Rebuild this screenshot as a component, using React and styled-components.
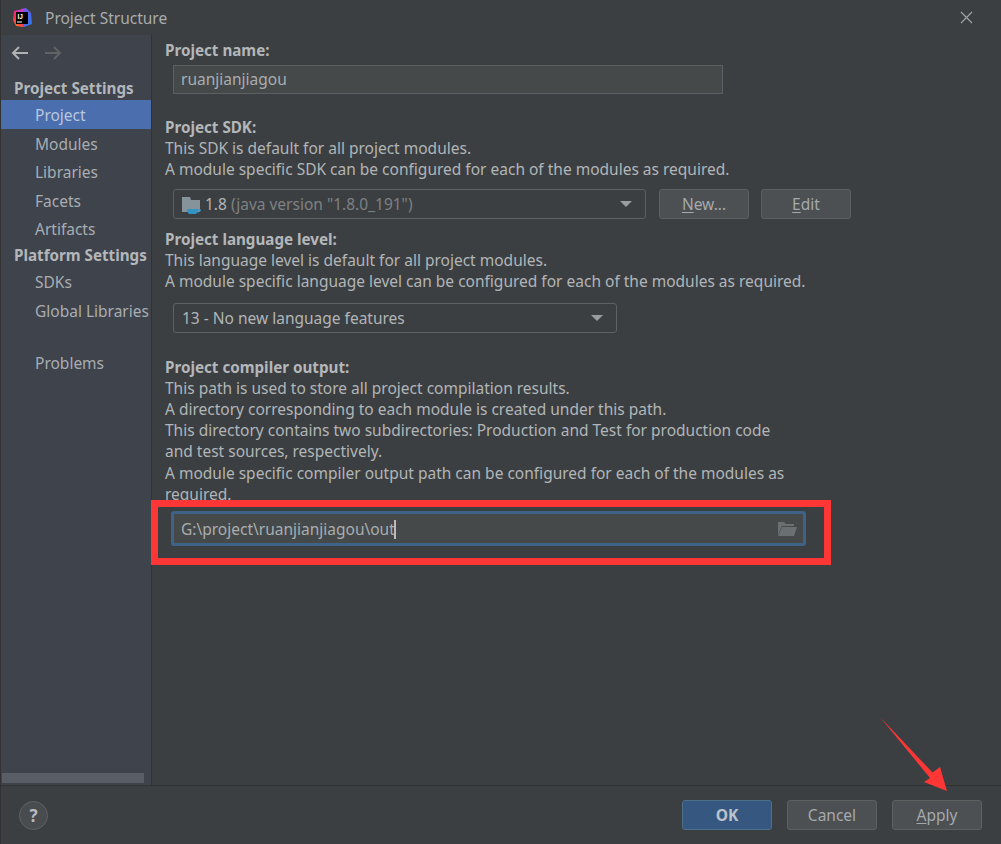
import React from "react";
import styled, { createGlobalStyle } from "styled-components";

const GlobalStyle = createGlobalStyle`
    html, body {
        margin: 0;
        padding: 0;
        background: #3c3f41;
    }
    body {
        font-family: "Noto Sans", "Open Sans", sans-serif;
        font-size: 15.5px;
        color: #bbbbbb;
    }
`

const Dialog = styled.div`
    position: relative;
    width: 1001px;
    height: 844px;
    box-sizing: border-box;
    border-left: 1px solid #323232;
    display: flex;
    flex-direction: column;
    overflow: hidden;
    background: #3c3f41;
`

const TitleBar = styled.div`
    height: 35px;
    flex: none;
    display: flex;
    align-items: center;
    padding: 0 28px 0 11px;
    gap: 13px;
    color: #a8acae;
    span {
        flex: 1;
    }
`

const Body = styled.div`
    flex: 1;
    display: flex;
    min-height: 0;
`

const Sidebar = styled.nav`
    width: 150px;
    flex: none;
    box-sizing: content-box;
    border-right: 1px solid #323232;
    background: #3e434c;
    display: flex;
    flex-direction: column;
    position: relative;
`

const NavArrows = styled.div`
    height: 41px;
    display: flex;
    align-items: center;
    gap: 15px;
    padding: 0 0 6px 10px;
    box-sizing: border-box;
`

const Heading = styled.div`
    height: 24px;
    line-height: 24px;
    padding-left: 13px;
    font-size: 15.2px;
    font-weight: 700;
    color: #b4b7ba;
    white-space: nowrap;
`

const Item = styled.div`
    height: 28.6px;
    line-height: 30.4px;
    padding-left: 34px;
    white-space: nowrap;
    color: ${(p) => (p.$selected ? "#b9c6dc" : "#a9adb2")};
    background: ${(p) => (p.$selected ? "#4b6eaf" : "transparent")};
`

const Spacer = styled.div`
    height: 24px;
`

const Scrollbar = styled.div`
    margin: auto 7px 2px 1px;
    height: 10px;
    background: #595d66;
`

const Main = styled.main`
    flex: 1;
    padding: 5px 0 0 13px;
    line-height: 21.3px;
    color: #b1b5b8;
`

const Section = styled.section`
    margin-top: ${(p) => p.$top}px;
    max-width: ${(p) => p.$wrap}px;
`

const Label = styled.div`
    font-size: 15.2px;
    font-weight: 700;
    color: #b4b7ba;
    margin-bottom: ${(p) => p.$tight ? -1 : 0}px;
`

const TextInput = styled.div`
    box-sizing: border-box;
    width: ${(p) => p.$width}px;
    height: 29px;
    margin: 4px 0 0 8px;
    padding-left: 7px;
    line-height: 27px;
    background: #45494a;
    border: 1px solid #5c6061;
    color: #a9adb0;
`

const Row = styled.div`
    display: flex;
    gap: 12px;
    margin: ${(p) => p.$top}px 0 0 8px;
`

const Combo = styled.div`
    box-sizing: border-box;
    width: ${(p) => p.$width}px;
    height: 30px;
    display: flex;
    align-items: center;
    gap: 3px;
    padding: 0 13px 0 8px;
    border: 1px solid #5e6162;
    border-radius: 3px;
    color: #b1b5b8;
    margin-right: 1px;
    em {
        font-style: normal;
        color: #7d8184;
    }
    i {
        margin-left: auto;
        width: 0;
        height: 0;
        border-left: 6px solid transparent;
        border-right: 6px solid transparent;
        border-top: 6px solid #9a9da0;
    }
    span {
        padding-top: 1px;
    }
`

const Button = styled.div`
    box-sizing: border-box;
    width: 90px;
    height: 30px;
    line-height: 28px;
    text-align: center;
    border-radius: 3px;
    border: 1px solid ${(p) => (p.$primary ? "#4c708c" : "#5e6060")};
    background: ${(p) => (p.$primary ? "#365880" : "#4c5052")};
    color: ${(p) => (p.$primary ? "#bbc3cc" : "#a4a9ad")};
    font-weight: ${(p) => (p.$primary ? 700 : 400)};
    u {
        text-underline-offset: 2px;
    }
`

const PathInput = styled.div`
    box-sizing: border-box;
    width: 635px;
    height: 35px;
    margin: 6px 0 0 6px;
    padding: 1px 6px 0 7px;
    display: flex;
    align-items: center;
    justify-content: space-between;
    background: #45494a;
    border: 3px solid #3f6287;
    border-radius: 3px;
    color: #a9adb0;
`

const Caret = styled.span`
    display: inline-block;
    width: 2px;
    height: 19px;
    margin-left: -1px;
    vertical-align: -4px;
    background: #bbbbbb;
`

const Footer = styled.footer`
    height: 59px;
    flex: none;
    box-sizing: border-box;
    border-top: 1px solid #323232;
    padding: 0 19px 0 18px;
    display: flex;
    align-items: center;
    gap: 15px;
`

const HelpButton = styled.div`
    width: 29px;
    height: 29px;
    box-sizing: border-box;
    margin-right: auto;
    border-radius: 50%;
    border: 1px solid #5e6263;
    background: #484c4e;
    color: #b7babc;
    font-weight: 700;
    font-size: 17px;
    line-height: 27px;
    text-align: center;
`

const Highlight = styled.div`
    position: absolute;
    left: 150px;
    top: 500px;
    width: 680px;
    height: 65px;
    box-sizing: border-box;
    border: 7px solid #ff3636;
    pointer-events: none;
`

const Overlay = styled.svg`
    position: absolute;
    left: -1px;
    top: 0;
    pointer-events: none;
`

const Logo = () => (
    <svg width="20" height="20" viewBox="0 0 20 20">
        <defs>
            <linearGradient id="ijA" x1="0.2" y1="1" x2="0.6" y2="0">
                <stop offset="0" stopColor="#f97a12" />
                <stop offset="0.5" stopColor="#fe2857" />
                <stop offset="1" stopColor="#c93cc8" />
            </linearGradient>
            <linearGradient id="ijB" x1="0" y1="0" x2="1" y2="1">
                <stop offset="0" stopColor="#8a4fe0" />
                <stop offset="1" stopColor="#1f7cf0" />
            </linearGradient>
        </defs>
        <path d="M9 1 L14 0 L19 5 L20 16 L12 19 L9 19 Z" fill="url(#ijB)" />
        <path d="M2 3 L11 1 L11 19 L4 18 L1 12 Z" fill="url(#ijA)" />
        <rect x="4" y="4" width="12" height="12" fill="#000" />
        <rect x="5" y="13.5" width="5" height="1" fill="#fff" />
        <text x="5.5" y="10.5" fontSize="6.5" fontWeight="700" fill="#fff" fontFamily="Liberation Sans">IJ</text>
    </svg>
)

const CloseIcon = () => (
    <svg width="13" height="13" viewBox="0 0 13 13">
        <path d="M1 1 L12 12 M12 1 L1 12" stroke="#a0a3a6" strokeWidth="1.2" fill="none" />
    </svg>
)

const NavArrow = ({ right, color }) => (
    <svg width="18" height="14" viewBox="0 0 18 14" style={{ transform: right ? "scaleX(-1)" : "none" }}>
        <path d="M17 7 H2 M8 1 L2 7 L8 13" stroke={color} strokeWidth="2" fill="none" />
    </svg>
)

const SdkIcon = () => (
    <svg width="20" height="20" viewBox="0 0 20 20" style={{ flex: "none" }}>
        <path d="M0 3 H8 L9 6 H18 V18 H0 Z" fill="#87939a" />
        <path d="M5 15 H16 L15.5 18 Q15 20 13 20 H8 Q6 20 5.5 18 Z" fill="#3592c4" />
        <path d="M16 16 H19 L17 18 H15.5" stroke="#3592c4" strokeWidth="1" fill="none" />
    </svg>
)

const FolderIcon = () => (
    <svg width="20" height="16" viewBox="0 0 20 16">
        <path d="M1 1 H7 L9 3 H17 V5 H5 L1 14 Z" fill="#6a6f72" />
        <path d="M5 6 H20 L17 15 H1 Z" fill="#6a6f72" />
    </svg>
)

const App = () => {
    return (
        <>
            <GlobalStyle />
            <Dialog>
                <TitleBar>
                    <Logo />
                    <span>Project Structure</span>
                    <CloseIcon />
                </TitleBar>
                <Body>
                    <Sidebar>
                        <NavArrows>
                            <NavArrow color="#afb1b3" />
                            <NavArrow right color="#5f6366" />
                        </NavArrows>
                        <Heading>Project Settings</Heading>
                        <Item $selected>Project</Item>
                        <Item>Modules</Item>
                        <Item>Libraries</Item>
                        <Item>Facets</Item>
                        <Item>Artifacts</Item>
                        <Heading>Platform Settings</Heading>
                        <Item>SDKs</Item>
                        <Item>Global Libraries</Item>
                        <Spacer />
                        <Item>Problems</Item>
                        <Scrollbar />
                    </Sidebar>
                    <Main>
                        <Label>Project name:</Label>
                        <TextInput $width={550}>ruanjianjiagou</TextInput>

                        <Section $top={23}>
                            <Label $tight>Project SDK:</Label>
                            <div>This SDK is default for all project modules.</div>
                            <div>A module specific SDK can be configured for each of the modules as required.</div>
                        </Section>
                        <Row $top={8.6}>
                            <Combo $width={473}>
                                <SdkIcon />
                                <span>1.8 <em>(java version "1.8.0_191")</em></span>
                                <i />
                            </Combo>
                            <Button><u>N</u>ew...</Button>
                            <Button><u>E</u>dit</Button>
                        </Row>

                        <Section $top={10.5}>
                            <Label $tight>Project language level:</Label>
                            <div>This language level is default for all project modules.</div>
                            <div>A module specific language level can be configured for each of the modules as required.</div>
                        </Section>
                        <Row $top={10.6}>
                            <Combo $width={444}>
                                <span>13 - No new language features</span>
                                <i />
                            </Combo>
                        </Row>

                        <Section $top={24.5} $wrap={630}>
                            <Label $tight>Project compiler output:</Label>
                            <div>This path is used to store all project compilation results.</div>
                            <div>A directory corresponding to each module is created under this path.</div>
                            <div>This directory contains two subdirectories: Production and Test for production code and test sources, respectively.</div>
                            <div>A module specific compiler output path can be configured for each of the modules as required.</div>
                        </Section>
                        <PathInput>
                            <span>G:\project\ruanjianjiagou\out<Caret /></span>
                            <FolderIcon />
                        </PathInput>
                    </Main>
                </Body>
                <Footer>
                    <HelpButton>?</HelpButton>
                    <Button $primary>OK</Button>
                    <Button>Cancel</Button>
                    <Button><u>A</u>pply</Button>
                </Footer>
                <Highlight />
                <Overlay width="1001" height="844" viewBox="0 0 1001 844">
                    <path d="M880 717 L932.5 772.5 L940 767 L947 791 L924 782 L930 778 Z" fill="#ff3636" />
                </Overlay>
            </Dialog>
        </>
    )
}

export default App;
